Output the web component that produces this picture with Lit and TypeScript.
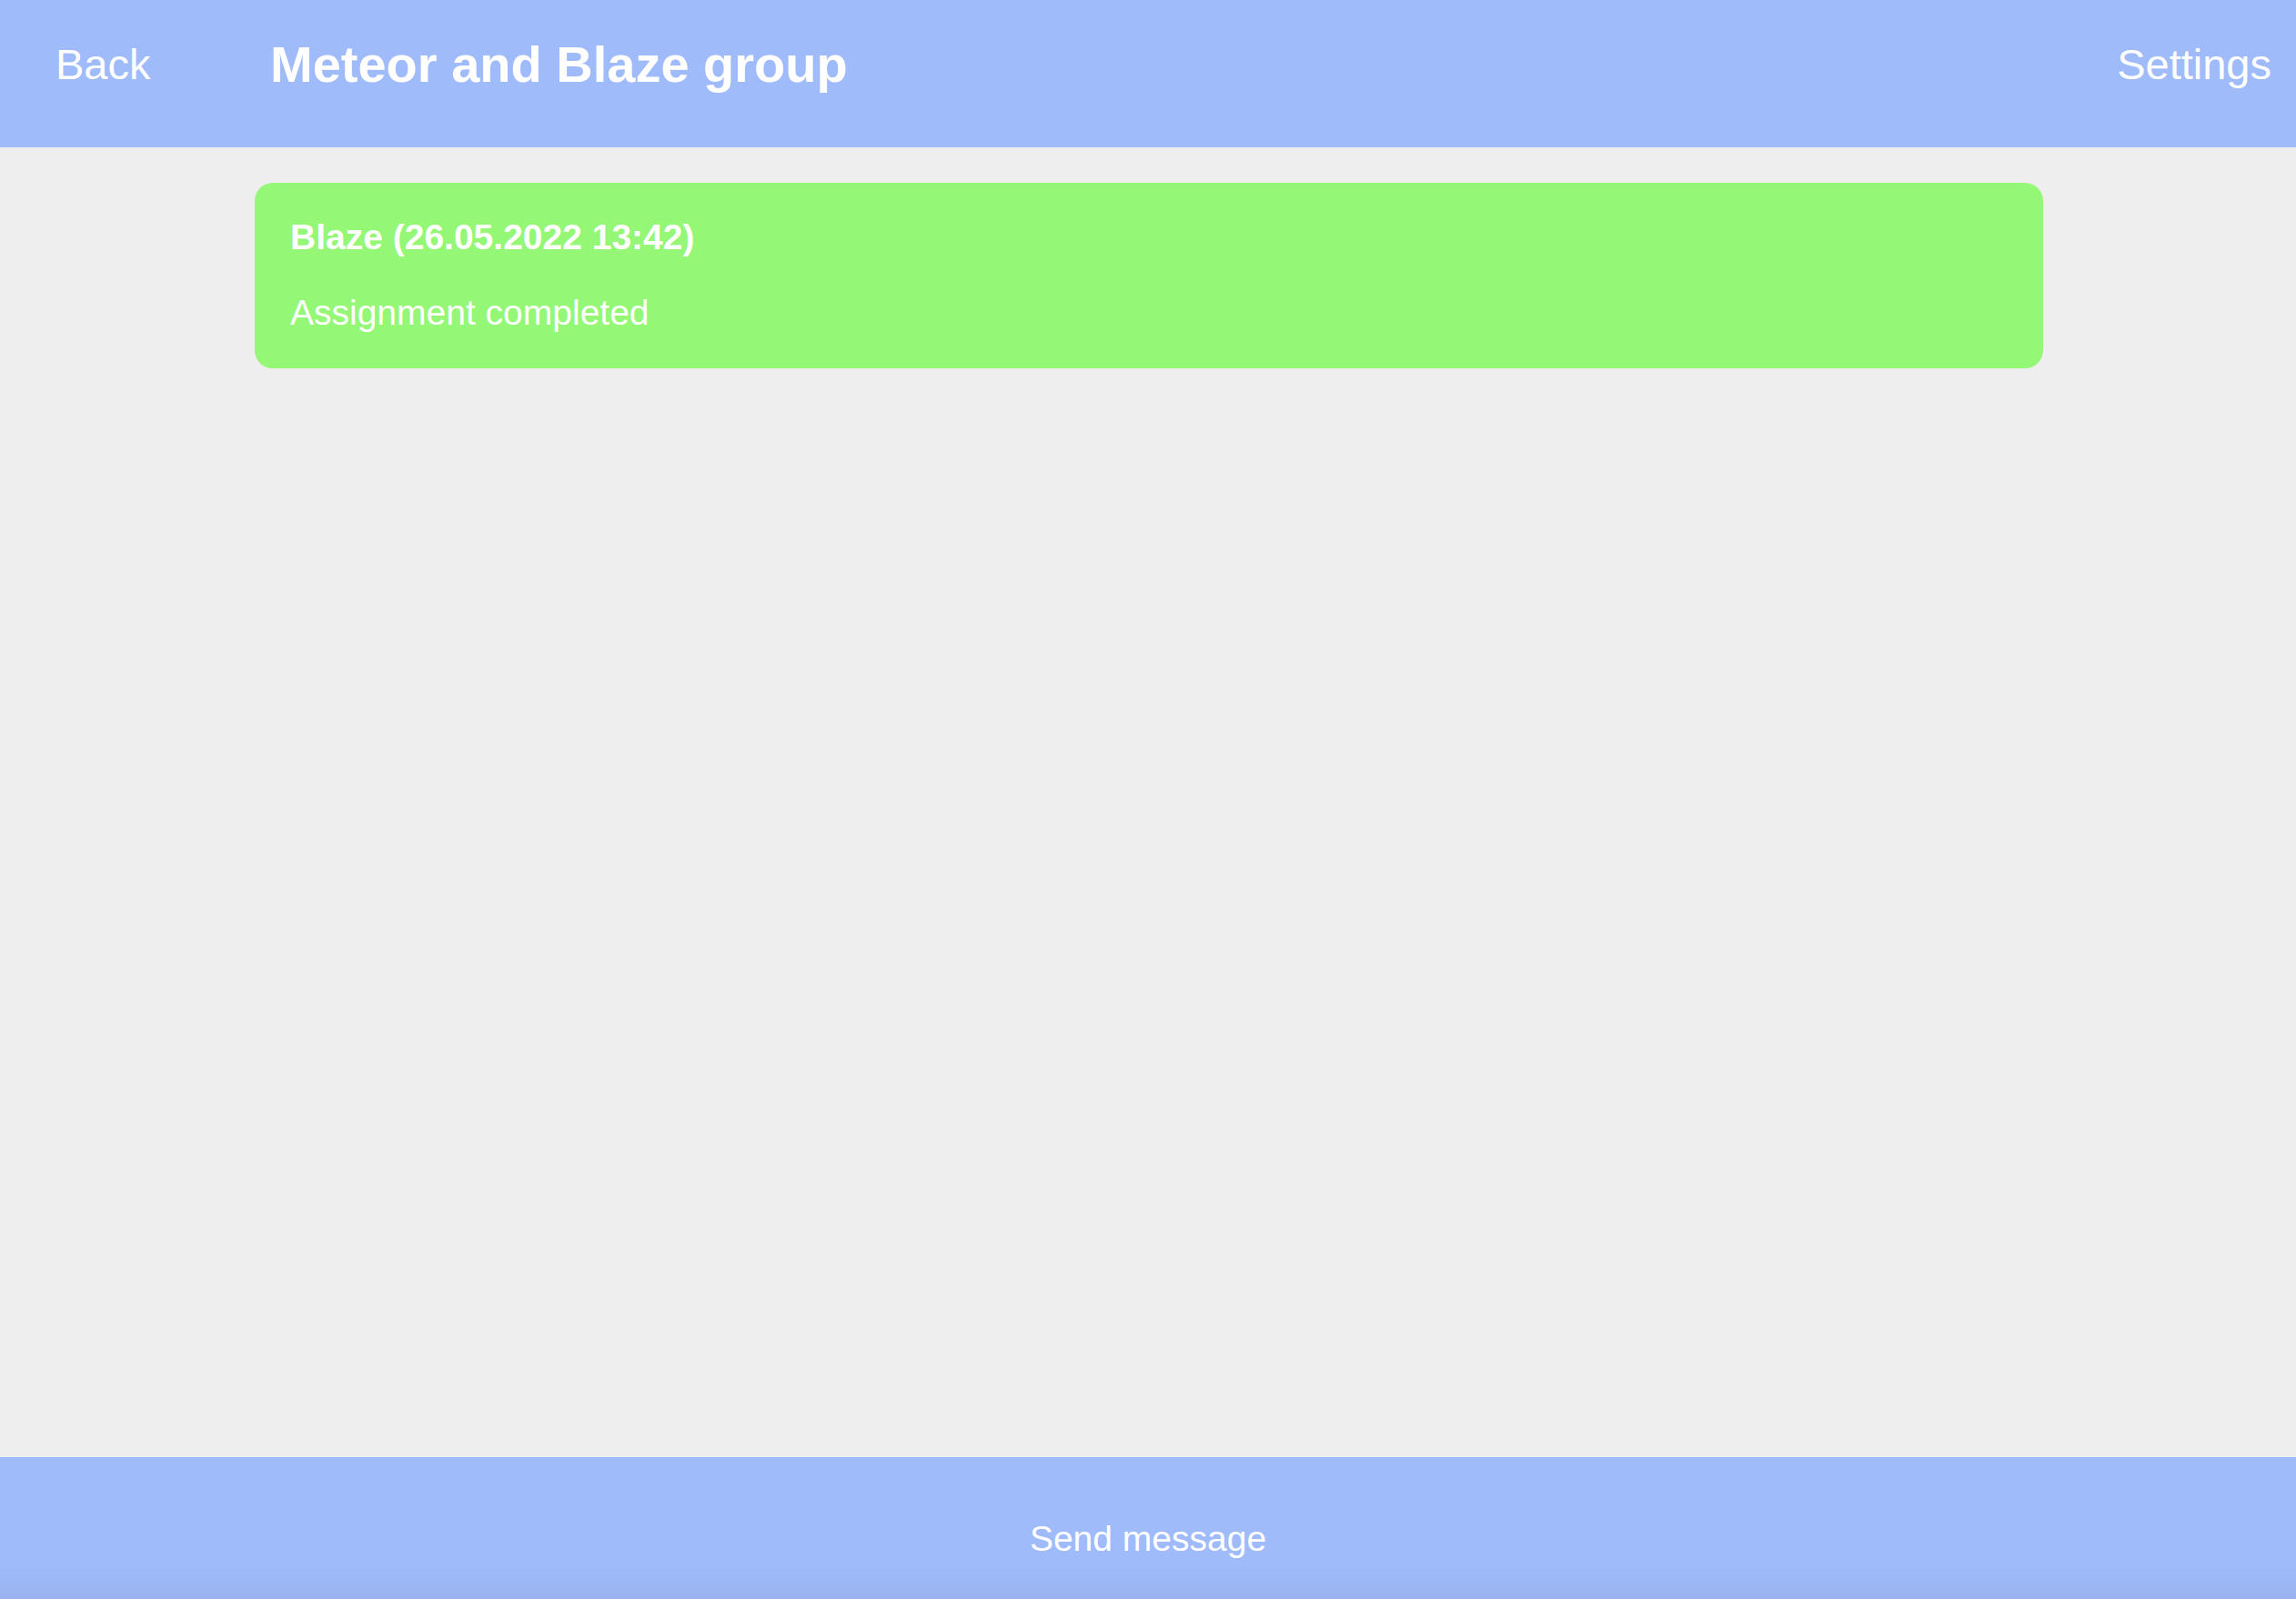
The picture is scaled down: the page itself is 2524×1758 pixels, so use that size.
import { LitElement, html, css } from "lit";
import { customElement, property } from "lit/decorators.js";

@customElement("chat-message")
class ChatMessage extends LitElement {
  @property() author = "";
  @property() sent = "";
  @property() text = "";

  static styles = css`
    :host { display: block; }
    .bubble {
      display: grid;
      gap: 41px;
      padding: 39px 39px 40px;
      border-radius: 20px;
      background: #94f776;
      color: #fff;
      font-size: 39px;
      line-height: 42px;
    }
    .author, .text { margin: 0; font-size: inherit; }
  `;

  render() {
    return html`<article class="bubble">
      <h2 class="author">${this.author} (${this.sent})</h2>
      <p class="text">${this.text}</p>
    </article>`;
  }
}

@customElement("app-root")
class AppRoot extends LitElement {
  static styles = css`
    :host {
      display: flex;
      flex-direction: column;
      min-height: 100vh;
      background: #eee;
      color: #fff;
      font-family: "Liberation Sans", Arial, sans-serif;
    }
    .bar {
      display: grid;
      grid-template-columns: 236px 1fr auto;
      align-items: center;
      padding: 39px 27px 59px 61px;
      background: #9fbbfa;
      line-height: 64px;
    }
    .link {
      color: inherit;
      text-decoration: none;
      font-size: 47px;
    }
    .title { margin: 0; font-size: 56px; }
    .messages { flex: 1; padding: 39px 278px 39px 280px; }
    .send {
      border: 0;
      padding: 60px 0 36px;
      background: linear-gradient(#9fbbfa 75%, #9cb7f5 90%, #99b1ee);
      color: inherit;
      font: inherit;
      font-size: 39px;
      line-height: 60px;
      cursor: pointer;
    }
  `;

  private messages = [
    { author: "Blaze", sent: "26.05.2022 13:42", text: "Assignment completed" },
  ];

  render() {
    return html`
      <header class="bar">
        <a class="link" href="#back">Back</a>
        <h1 class="title">Meteor and Blaze group</h1>
        <a class="link" href="#settings">Settings</a>
      </header>
      <main class="messages">
        ${this.messages.map((m) => html`<chat-message .author=${m.author} .sent=${m.sent} .text=${m.text}></chat-message>`)}
      </main>
      <button class="send" type="button">Send message</button>
    `;
  }
}
